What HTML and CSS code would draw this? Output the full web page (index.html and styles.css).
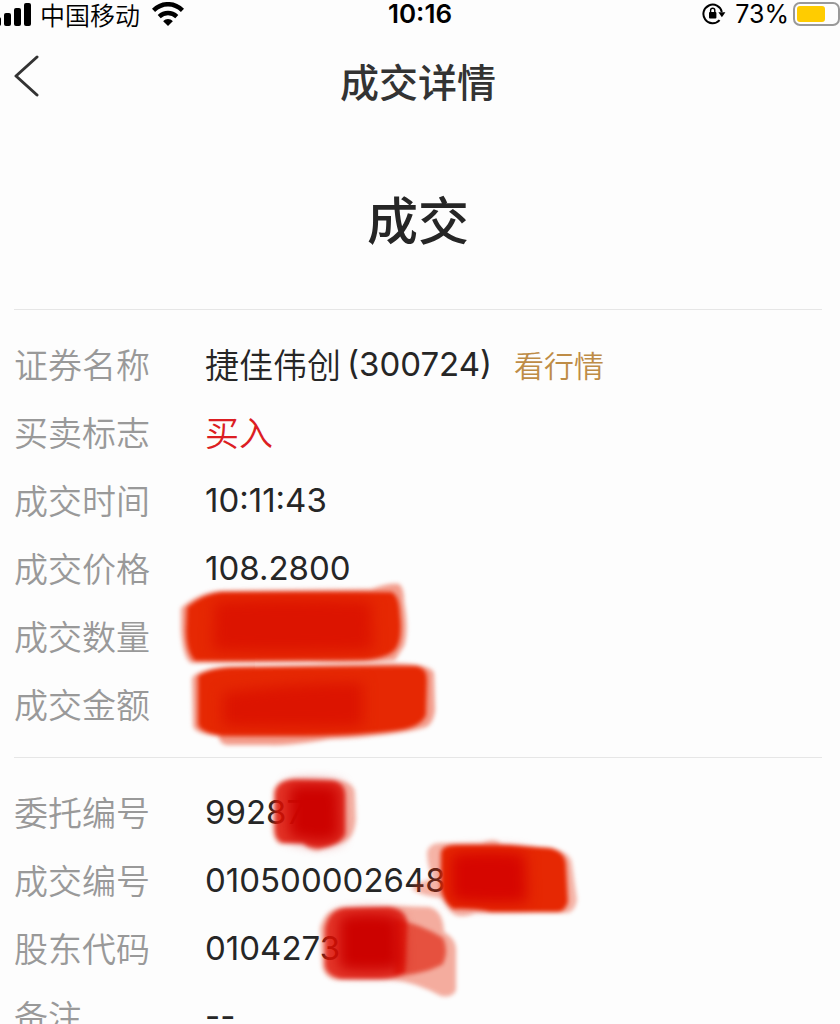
FILE: index.html
```html
<!DOCTYPE html>
<html lang="zh-CN">
<head>
    <meta charset="UTF-8">
    <meta name="viewport" content="width=device-width, initial-scale=1.0">
    <title>成交详情</title>
    <link rel="stylesheet" href="styles.css">
</head>
<body>

<!-- Status Bar -->
<div class="status-bar">
    <div class="status-left">
        <svg class="signal" width="31" height="24" viewBox="0 0 31 24" aria-hidden="true">
            <rect x="-5" y="15" width="6" height="9" rx="2"/>
            <rect x="4" y="11" width="7" height="13" rx="2"/>
            <rect x="14" y="6" width="7" height="18" rx="2"/>
            <rect x="24" y="1" width="7" height="23" rx="2"/>
        </svg>
        <span class="carrier">中国移动</span>
        <svg class="wifi" width="32" height="24" viewBox="0 0 32 24" aria-hidden="true">
            <path d="M1.5 8.4C10 .2 22 .2 30.5 8.4" fill="none" stroke="#000" stroke-width="4.6"/>
            <path d="M7.2 14.6c5.2-4.8 12.4-4.8 17.6 0" fill="none" stroke="#000" stroke-width="4.4"/>
            <path d="M11.2 19.2c2.6-3 7-3 9.6 0L16 24z"/>
        </svg>
    </div>
    <time class="clock">10:16</time>
    <div class="status-right">
        <svg class="lock" width="24" height="22" viewBox="0 0 24 22" aria-hidden="true">
            <path d="M19.8 9A9.3 9.3 0 1 0 17.6 17.2" fill="none" stroke="#000" stroke-width="2"/>
            <path d="M16.4 9.2h7l-3.5 5z"/>
            <rect x="7" y="9" width="7.4" height="6.6" rx="1"/>
            <path d="M8.6 10V7.4a2.1 2.1 0 0 1 4.2 0V10" fill="none" stroke="#000" stroke-width="1.4"/>
        </svg>
        <span class="percent">73%</span>
        <svg class="battery" width="47" height="24" viewBox="0 0 47 24" aria-hidden="true">
            <rect x="1" y="1" width="45" height="22" rx="6" fill="none" stroke="#999" stroke-width="2"/>
            <rect x="4" y="4" width="28" height="16" rx="3" fill="#fc0"/>
        </svg>
    </div>
</div>

<header class="nav-bar">
    <button class="back-button" aria-label="返回">
        <svg width="26" height="42" viewBox="0 0 26 42" aria-hidden="true">
            <path d="M23 2L2 21l21 19" fill="none" stroke="#333" stroke-width="3" stroke-linecap="round" stroke-linejoin="round"/>
        </svg>
    </button>
    <h1>成交详情</h1>
</header>

<main>
    <h2 class="result">成交</h2>

    <dl class="details">
        <div class="row">
            <dt>证券名称</dt>
            <dd>捷佳伟创<span class="number code">(300724)</span><a class="quote-link" href="#">看行情</a></dd>
        </div>
        <div class="row">
            <dt>买卖标志</dt>
            <dd class="buy">买入</dd>
        </div>
        <div class="row">
            <dt>成交时间</dt>
            <dd class="number">10:11:43</dd>
        </div>
        <div class="row">
            <dt>成交价格</dt>
            <dd class="number">108.2800</dd>
        </div>
        <div class="row">
            <dt>成交数量</dt>
            <dd>
                <svg class="mask mask-amount" width="290" height="100" viewBox="0 0 290 100" aria-hidden="true">
                    <g class="soft">
                        <path d="M22 38Q40 22 62 21L212 19Q230 13 240 14Q245 18 245 32Q250 60 245 76L236 90Q200 94 150 92L32 93Q24 88 22 60z" fill="#e62803" opacity=".45"/>
                        <path d="M28 37Q44 24 62 22L232 22Q240 24 241 45Q244 70 236 80Q228 88 205 90L60 91L36 91Q27 82 27 60z" fill="#e62803"/>
                    </g>
                    <path class="soft-wide" d="M56 32Q130 28 212 32L214 80Q130 82 54 80z" fill="#dc1400"/>
                </svg>
            </dd>
        </div>
        <div class="row">
            <dt>成交金额</dt>
            <dd>
                <svg class="mask mask-total" width="290" height="100" viewBox="0 0 290 100" aria-hidden="true">
                    <g class="soft">
                        <path d="M33 18Q38 10 65 7L235 3Q274 4 275 14L276 50Q274 66 264 68Q235 76 170 79Q130 86 110 85L68 85Q60 84 60 76Q36 74 34 66z" fill="#e62803" opacity=".45"/>
                        <path d="M39 16Q50 8 75 7L258 6Q268 8 268 20L267 55Q262 68 235 71Q190 76 130 76L62 76Q40 72 39 64z" fill="#e62803"/>
                    </g>
                    <path class="soft-wide" d="M64 33Q140 22 204 23L204 66Q130 68 64 66z" fill="#dc1400"/>
                </svg>
            </dd>
        </div>
    </dl>

    <dl class="details">
        <div class="row">
            <dt>委托编号</dt>
            <dd class="number">99287
                <svg class="mask mask-order" width="200" height="100" viewBox="0 0 200 100" aria-hidden="true">
                    <g class="soft">
                        <path d="M84 30Q88 19 105 18L140 19Q164 20 166 32L167 60Q165 80 152 83L128 91Q120 90 114 84L90 84Q83 80 83 65z" fill="#e62803" opacity=".35"/>
                        <path d="M86 34Q88 20 105 20L145 21Q156 24 156 35L156 74Q150 86 130 88Q118 87 114 83L94 83Q86 80 86 70z" fill="#de1003" opacity=".78"/>
                    </g>
                    <path class="soft-wide" d="M100 26Q120 22 150 26L151 78Q130 86 112 79L100 77z" fill="#cc0200"/>
                </svg>
            </dd>
        </div>
        <div class="row">
            <dt>成交编号</dt>
            <dd class="number">010500002648
                <svg class="mask mask-deal" width="200" height="100" viewBox="0 0 200 100" aria-hidden="true">
                    <g class="soft">
                        <path d="M28 22Q30 13 42 13L82 13Q96 7 102 14L152 18Q172 22 173 34L178 70Q176 82 168 83L76 83Q60 90 52 82L42 68Q24 66 14 60Q12 52 24 52L34 48Q28 36 28 22z" fill="#e62803" opacity=".35"/>
                        <path d="M42 22Q44 15 57 15L110 15L152 18Q166 22 167 34L169 72Q166 82 158 82L92 82Q75 78 54 79Q46 74 42 60z" fill="#e62803"/>
                    </g>
                    <path class="soft-wide" d="M52 24Q90 20 126 24L128 72Q80 74 52 70z" fill="#d60600"/>
                </svg>
            </dd>
        </div>
        <div class="row">
            <dt>股东代码</dt>
            <dd class="number">0104273
                <svg class="mask mask-holder" width="290" height="120" viewBox="0 0 290 120" aria-hidden="true">
                    <g class="soft">
                        <path d="M131 38Q136 18 155 17L205 16L240 17Q254 20 255 42Q266 48 267 58L267 100Q264 108 252 106Q226 92 204 90L148 90Q135 88 133 76z" fill="#e62803" opacity=".38"/>
                        <path d="M205 29Q232 34 254 48Q260 60 254 74Q236 84 205 86z" fill="#dc1400" opacity=".6"/>
                        <path d="M136 38Q140 20 156 18L200 17Q218 20 218 34L216 82Q208 89 190 89L152 89Q138 86 136 76z" fill="#de1003" opacity=".75"/>
                    </g>
                    <path class="soft-wide" d="M150 26Q180 20 210 26L212 79Q180 83 150 79z" fill="#cc0200"/>
                </svg>
            </dd>
        </div>
        <div class="row">
            <dt>备注</dt>
            <dd class="number">--</dd>
        </div>
    </dl>
</main>

</body>
</html>
```

FILE: styles.css
```css
* {
    box-sizing: border-box;
}
body {
    font-family: 'Noto Sans CJK SC', sans-serif;
    background-color: #fdfdfd;
    margin: 0;
    height: 100vh;
    overflow: hidden;
    display: flex;
    flex-direction: column;
    color: #262626;
}
.status-bar {
    display: grid;
    grid-template-columns: 1fr auto 1fr;
    align-items: center;
    height: 28px;
    flex-shrink: 0;
    color: #000;
    font-size: 25px;
    line-height: 28px;
}
.status-left,
.status-right {
    display: flex;
    align-items: center;
}
.status-right {
    justify-content: flex-end;
}
.carrier {
    margin: 0 12px 0 9px;
    font-weight: 350;
    line-height: 26px;
}
.clock,
.percent,
.number {
    font-family: Inter, 'Noto Sans CJK SC', sans-serif;
}
.clock {
    font-size: 26px;
    font-weight: 600;
}
.percent {
    margin: 0 4px 0 9px;
}
.nav-bar {
    display: grid;
    grid-template-columns: 1fr auto 1fr;
    align-items: center;
    height: 104px;
    flex-shrink: 0;
    padding: 0 18px 0 14px;
}
.back-button {
    justify-self: start;
    display: flex;
    padding: 0 0 8px;
    border: none;
    background: none;
    cursor: pointer;
}
.nav-bar h1 {
    margin: 0;
    color: #333;
    font-size: 39px;
    font-weight: 500;
    line-height: 56px;
}
main {
    flex: 1;
    min-height: 0;
    overflow-y: auto;
    scrollbar-width: none;
    padding: 0 18px 0 14px;
}
.result {
    margin: 0;
    padding: 46px 0 51px;
    text-align: center;
    font-size: 51px;
    font-weight: 500;
    line-height: 80px;
}
.details {
    margin: 0;
    padding: 20px 0 19px;
    border-top: 1px solid #e6e6e6;
}
.row {
    display: grid;
    grid-template-columns: 191px 1fr;
    height: 68px;
    line-height: 68px;
    font-size: 34px;
    font-weight: 350;
}
dt {
    color: #999;
}
dd {
    position: relative;
    margin: 0;
    display: flex;
    align-items: center;
}
.number {
    font-size: 33px;
    font-weight: 400;
}
.code {
    margin-left: 6px;
}
.buy {
    color: #dc1e23;
}
.quote-link {
    margin-left: 22px;
    color: #be8c46;
    font-size: 30px;
    text-decoration: none;
}

/* Brush strokes over the private values */
.mask {
    position: absolute;
    z-index: 1;
    overflow: visible;
}
.soft {
    filter: blur(2px);
}
.soft-wide {
    filter: blur(7px);
}
.mask-amount {
    left: -46px;
    top: -32px;
}
.mask-total {
    left: -46px;
    top: -10px;
}
.mask-order {
    left: -16px;
    top: -18px;
}
.mask-deal {
    left: 194px;
    top: -16px;
}
.mask-holder {
    left: -16px;
    top: -24px;
}
```
